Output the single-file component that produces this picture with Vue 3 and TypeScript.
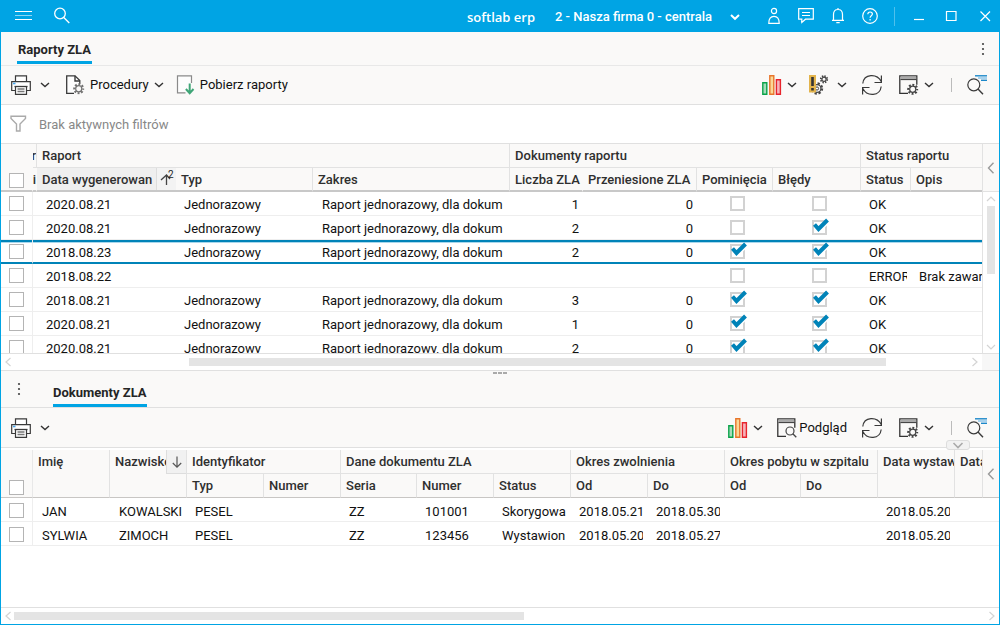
<script setup lang="ts">
import { ref } from 'vue'

interface Report {
  date: string
  type: string
  range: string
  count: string
  moved: string
  skipped: boolean
  errors: boolean
  status: string
  note: string
}

const single = 'Jednorazowy'
const scope = 'Raport jednorazowy, dla dokum'

function report(date: string, count: string, skipped: boolean, errors: boolean): Report {
  return { date, type: single, range: scope, count, moved: '0', skipped, errors, status: 'OK', note: '' }
}

const reports = ref<Report[]>([
  report('2020.08.21', '1', false, false),
  report('2020.08.21', '2', false, true),
  report('2018.08.23', '2', true, true),
  { date: '2018.08.22', type: '', range: '', count: '', moved: '', skipped: false, errors: false, status: 'ERROR', note: 'Brak zawar' },
  report('2018.08.21', '3', true, true),
  report('2020.08.21', '1', true, true),
  report('2020.08.21', '2', true, true)
])
const selected = ref(2)

const documents = ref<string[][]>([
  ['JAN', 'KOWALSKI', 'PESEL', '', 'ZZ', '101001', 'Skorygowa', '2018.05.21', '2018.05.30', '', '', '2018.05.20', ''],
  ['SYLWIA', 'ZIMOCH', 'PESEL', '', 'ZZ', '123456', 'Wystawion', '2018.05.20', '2018.05.27', '', '', '2018.05.20', '']
])
const documentColumns = ['Typ', 'Numer', 'Seria', 'Numer', 'Status', 'Od', 'Do', 'Od', 'Do']
</script>

<template>
  <svg class="symbols" aria-hidden="true">
    <symbol id="chev" viewBox="0 0 10 6"><path d="M1 1l4 3.600L9 1" fill="none" stroke="#333" stroke-width="1.400" /></symbol>
    <symbol id="print" viewBox="0 0 20 20">
      <g fill="#fff" stroke="#3a3a3a" stroke-width="1.200">
        <path d="M4.500 7V.8h11V7M4.500 15.500H.7V6.700h18.600v8.800h-3.800" />
        <path d="M4.500 11.500h11v7.800h-11z" />
      </g>
      <path d="M3.500 11.500h13" stroke="#3a3a3a" stroke-width="1.300" />
      <path d="M6.500 14h7M6.500 16.500h7" stroke="#777" stroke-width="1.400" />
      <path d="M2 8.500h2.500" stroke="#4aa8ee" stroke-width="1.600" />
    </symbol>
    <symbol id="gear" viewBox="0 0 12 12">
      <g fill="none">
        <circle cx="6" cy="6" r="4.700" stroke="#444" stroke-width="2.200" stroke-dasharray="2 1.690" stroke-dashoffset="1" />
        <circle cx="6" cy="6" r="3.200" fill="#faf9f8" stroke="#444" stroke-width="1.300" />
      </g>
    </symbol>
    <symbol id="bars" viewBox="0 0 20 20">
      <path d="M.8 7.800h4v11.400h-4z" fill="#a6dcbb" stroke="#0aa34a" stroke-width="1.400" />
      <path d="M7.800.8h4v18.400h-4z" fill="#fbd896" stroke="#e8762c" stroke-width="1.400" />
      <path d="M14.400 4.800h4v14.400h-4z" fill="#f6b3ba" stroke="#e8242c" stroke-width="1.400" />
    </symbol>
    <symbol id="refresh" viewBox="0 0 20 20">
      <g fill="none" stroke="#3a3a3a" stroke-width="1.200">
        <path d="M.8 8.500C2-1.500 15-1.700 19.200 6.500M12.500 7.500h6.900V.5" />
        <path d="M19.200 11.500C18 21.500 5 21.700.8 13.500M7.500 12.500H.6v7" />
      </g>
    </symbol>
    <symbol id="window" viewBox="0 0 20 20">
      <path d="M.7.800h17v17.900H.7z" fill="#faf9f8" />
      <path d="M9 18.400H.8V.8h17v9" fill="none" stroke="#333" stroke-width="1.300" />
      <path d="M1.500 2.800h15.700" stroke="#aaa" stroke-width="2.400" />
      <path d="M1.500 4.600h15.700" stroke="#333" stroke-width="1" />
    </symbol>
    <symbol id="find" viewBox="0 0 20 20">
      <g fill="none">
        <circle cx="6.800" cy="9.800" r="6" stroke="#3a3a3a" stroke-width="1.200" />
        <path d="M11 14l5 5.200" stroke="#3a3a3a" stroke-width="1.400" />
        <path d="M8 .8h12" stroke="#1b87c9" stroke-width="1.400" />
        <path d="M11 3h9" stroke="#8cc4ea" stroke-width="1.500" />
        <path d="M14 5.300h6" stroke="#1b87c9" stroke-width="1.400" />
      </g>
    </symbol>
    <symbol id="left" viewBox="0 0 8 12"><path d="M6.500.8L1.500 6l5 5.200" fill="none" stroke="currentColor" stroke-width="1.400" /></symbol>
  </svg>

  <div class="app">
    <header class="title">
      <button class="t-btn" aria-label="Menu">
        <svg width="18" height="12"><path d="M0 1.500h17M0 9.500h17" stroke="#fff" /><path d="M0 5.500h17" stroke="#8dd6f4" /></svg>
      </button>
      <button class="t-btn find" aria-label="Szukaj">
        <svg width="18" height="18" fill="none" stroke="#fff" stroke-width="1.300"><circle cx="7" cy="6.500" r="5.300" /><path d="M10.800 10.500l5.500 5.500" /></svg>
      </button>
      <span class="brand">softlab erp</span>
      <button class="firm">2 - Nasza firma 0 - centrala
        <svg width="10" height="8" fill="none" stroke="#fff" stroke-width="2"><path d="M1 2l4 3.800L9 2" /></svg>
      </button>
      <button class="t-icon" aria-label="Użytkownik">
        <svg width="12" height="18" fill="none" stroke="#fff" stroke-width="1.200"><circle cx="6" cy="4" r="2.600" /><path d="M.8 16.300c0-4.500 1.400-7 5.200-7s5.200 2.500 5.200 7z" /></svg>
      </button>
      <button class="t-icon" aria-label="Wiadomości">
        <svg width="16" height="18" fill="none" stroke="#fff" stroke-width="1.200"><path d="M.7 1.700h14.600v10.500H7.500l-3.700 3.300v-3.300H.7zM4 5.500h8M4 8.500h8" /></svg>
      </button>
      <button class="t-icon" aria-label="Powiadomienia">
        <svg width="14" height="18" fill="none" stroke="#fff" stroke-width="1.200"><path d="M1 13.300h12M2.500 13V7.500C2.500 4.300 4.300 2.500 7 2.500s4.500 1.800 4.500 5V13M7 1v1.500M5.300 15.700h3.400" /></svg>
      </button>
      <button class="t-icon" aria-label="Pomoc">
        <svg width="16" height="18" fill="none" stroke="#fff" stroke-width="1.200"><circle cx="8" cy="9" r="7.300" /><path d="M5.800 7.300c0-1.500 1-2.300 2.300-2.300s2.300.8 2.300 2.100c0 1.600-2.300 1.700-2.300 3.600M8.100 12v1.400" /></svg>
      </button>
      <i class="t-sep"></i>
      <button class="t-icon" aria-label="Minimalizuj"><svg width="12" height="12"><path d="M1 9.500h10" stroke="#fff" stroke-width="1.200" /></svg></button>
      <button class="t-icon" aria-label="Maksymalizuj"><svg width="12" height="12"><path d="M1.500 1.500h9.500v9h-9.500z" fill="none" stroke="#fff" stroke-width="1.200" /></svg></button>
      <button class="t-icon close" aria-label="Zamknij"><svg width="12" height="12"><path d="M1.500 1.500l9.500 9.500M11 1.500L1.500 11" stroke="#fff" stroke-width="1.200" /></svg></button>
    </header>

    <section class="pane reports">
      <div class="tabs">
        <button class="tab">Raporty ZLA</button>
        <button class="more right" aria-label="Więcej"><svg width="4" height="14" fill="#444"><circle cx="2" cy="2" r="1.100" /><circle cx="2" cy="7" r="1.100" /><circle cx="2" cy="12" r="1.100" /></svg></button>
      </div>
      <div class="toolbar">
        <button class="tool split" aria-label="Drukuj"><svg class="i20"><use href="#print" /></svg><svg class="chev"><use href="#chev" /></svg></button>
        <button class="tool procedures">
          <svg class="i20">
            <path d="M9 18.300H1.700V.8H10l4.800 4.800v3.200" fill="#fdfdfd" stroke="#3a3a3a" stroke-width="1.300" />
            <path d="M10 .8v5.200h5" fill="none" stroke="#3a3a3a" stroke-width="1.400" />
            <use class="soft" href="#gear" x="8" y="8" width="11.500" height="11.500" />
          </svg>
          <span>Procedury</span><svg class="chev"><use href="#chev" /></svg>
        </button>
        <button class="tool download">
          <svg class="i20">
            <path d="M9.500 17.800H1.500V.8h14V8" fill="#fdfdfd" stroke="#8a8a8a" stroke-width="1.200" />
            <path d="M13.700 8.500V18M9.900 14l3.800 4.200 3.800-4.200" fill="none" stroke="#3fa577" stroke-width="2" />
          </svg>
          <span>Pobierz raporty</span>
        </button>
        <div class="tools">
          <button class="tool" aria-label="Wykres"><svg class="i20"><use href="#bars" /></svg><svg class="chev"><use href="#chev" /></svg></button>
          <button class="tool wide" aria-label="Operacje">
            <svg class="i20">
              <circle cx="8" cy="13.500" r="5" fill="none" stroke="#444" stroke-width="2.400" stroke-dasharray="2.200 1.720" />
              <circle cx="8" cy="13.500" r="3.900" fill="#faf9f8" stroke="#444" stroke-width="1.200" />
              <circle cx="8" cy="13.500" r="1.600" fill="none" stroke="#444" />
              <circle cx="15" cy="4.300" r="3.200" fill="none" stroke="#444" stroke-width="1.800" stroke-dasharray="1.400 1.110" />
              <circle cx="15" cy="4.300" r="2.100" fill="#faf9f8" stroke="#444" stroke-width="1.200" />
              <path d="M0 0h7v17.500H0z" fill="#e3b44c" />
              <path d="M3.500 2v9M3.500 13v2.600" stroke="#333" stroke-width="2.600" />
            </svg>
            <svg class="chev"><use href="#chev" /></svg>
          </button>
          <button class="tool" aria-label="Odśwież"><svg class="i20"><use href="#refresh" /></svg></button>
          <button class="tool" aria-label="Ustawienia okna"><svg class="i20"><use href="#window" /><use href="#gear" x="8" y="8.500" width="11.500" height="11.500" /></svg><svg class="chev"><use href="#chev" /></svg></button>
          <i class="sep"></i>
          <button class="tool" aria-label="Znajdź"><svg class="i20"><use href="#find" /></svg></button>
        </div>
      </div>
      <div class="filters">
        <svg width="18" height="18" fill="none" stroke="#aaa" stroke-width="1.400"><path d="M1 1.200h14.500v2.300L10 9v7H6.500V9L1 3.500z" /></svg>
        <span>Brak aktywnych filtrów</span>
      </div>

      <div class="grid">
        <div class="view">
          <table class="r-table">
            <colgroup>
              <col class="w-check" /><col class="w-cut" /><col class="w-date" /><col class="w-type" /><col class="w-range" /><col class="w-count" />
              <col class="w-moved" /><col class="w-skip" /><col class="w-err" /><col class="w-status" /><col />
            </colgroup>
            <thead>
              <tr>
                <th class="pick" rowspan="2"><input type="checkbox" aria-label="Zaznacz wszystkie raporty" /></th>
                <th class="cut"><div>ar</div></th>
                <th colspan="3"><div>Raport</div></th>
                <th colspan="4"><div>Dokumenty raportu</div></th>
                <th colspan="2" class="last"><div>Status raportu</div></th>
              </tr>
              <tr>
                <th class="cut"><div>i</div></th>
                <th class="sorted">
                  <div><span>Data wygenerowan</span>
                    <b><svg width="16" height="20" fill="none" stroke="#444" stroke-width="1.300"><path d="M9.500 17V7.500M4 12l5.500-5 3.500 4" /></svg><sup>2</sup></b>
                  </div>
                </th>
                <th><div>Typ</div></th>
                <th><div>Zakres</div></th>
                <th class="open"><div>Liczba ZLA</div></th>
                <th><div>Przeniesione ZLA</div></th>
                <th><div>Pominięcia</div></th>
                <th><div>Błędy</div></th>
                <th><div>Status</div></th>
                <th class="last"><div>Opis</div></th>
              </tr>
            </thead>
            <tbody>
              <tr v-for="(r, i) in reports" :key="i" :class="{ selected: i === selected }" @click="selected = i">
                <td class="pick"><input type="checkbox" :aria-label="'Zaznacz raport ' + (i + 1)" /></td>
                <td></td>
                <td><div>{{ r.date }}</div></td>
                <td><div>{{ r.type }}</div></td>
                <td><div>{{ r.range }}</div></td>
                <td class="num"><div>{{ r.count }}</div></td>
                <td class="num"><div>{{ r.moved }}</div></td>
                <td class="flag">
                  <label><input v-model="r.skipped" type="checkbox" aria-label="Pominięcia" />
                    <svg v-if="r.skipped" width="18" height="14"><path d="M2.500 6.500l4 4.500L15.500 2" /></svg></label>
                </td>
                <td class="flag">
                  <label><input v-model="r.errors" type="checkbox" aria-label="Błędy" />
                    <svg v-if="r.errors" width="18" height="14"><path d="M2.500 6.500l4 4.500L15.500 2" /></svg></label>
                </td>
                <td><div>{{ r.status }}</div></td>
                <td class="note"><div>{{ r.note }}</div></td>
              </tr>
            </tbody>
          </table>
        </div>
        <div class="side">
          <button class="fold" aria-label="Zwiń panel"><svg width="8" height="12"><use href="#left" /></svg></button>
          <div class="v-scroll">
            <svg width="10" height="6"><path d="M1 5l4-4 4 4" /></svg>
            <div class="v-track"><i></i></div>
            <svg width="10" height="6"><path d="M1 1l4 4 4-4" /></svg>
          </div>
        </div>
      </div>
      <div class="h-scroll">
        <div class="bar">
          <svg width="8" height="10"><path d="M6.500 1l-4.500 4 4.500 4" /></svg>
          <div class="track"><i class="mid"></i></div>
          <svg width="8" height="10"><path d="M1.500 1L6 5 1.500 9" /></svg>
        </div>
        <div class="corner"></div>
      </div>
    </section>

    <section class="pane documents">
      <div class="grip"><i></i><i></i><i></i></div>
      <div class="tabs">
        <button class="more" aria-label="Więcej"><svg width="4" height="14" fill="#444"><circle cx="2" cy="2" r="1.100" /><circle cx="2" cy="7" r="1.100" /><circle cx="2" cy="12" r="1.100" /></svg></button>
        <button class="tab">Dokumenty ZLA</button>
      </div>
      <div class="toolbar">
        <button class="tool split" aria-label="Drukuj"><svg class="i20"><use href="#print" /></svg><svg class="chev"><use href="#chev" /></svg></button>
        <div class="tools">
          <button class="tool" aria-label="Wykres"><svg class="i20"><use href="#bars" /></svg><svg class="chev"><use href="#chev" /></svg></button>
          <button class="tool preview">
            <svg class="i20"><use href="#window" /><circle cx="13" cy="13" r="4" fill="#faf9f8" stroke="#444" stroke-width="1.200" /><path d="M15.800 15.800l3.500 3.400" stroke="#444" stroke-width="1.300" /></svg>
            <span>Podgląd</span>
          </button>
          <button class="tool" aria-label="Odśwież"><svg class="i20"><use href="#refresh" /></svg></button>
          <button class="tool" aria-label="Ustawienia okna"><svg class="i20"><use href="#window" /><use href="#gear" x="8" y="8.500" width="11.500" height="11.500" /></svg><svg class="chev"><use href="#chev" /></svg></button>
          <i class="sep"></i>
          <button class="tool" aria-label="Znajdź"><svg class="i20"><use href="#find" /></svg></button>
        </div>
        <button class="expander" aria-label="Rozwiń filtry"><svg width="12" height="7"><path d="M1.500 1L6 5.500 10.500 1" fill="none" stroke="#aaa" stroke-width="1.600" /></svg></button>
      </div>

      <div class="grid">
        <div class="view">
          <table class="d-table">
            <colgroup>
              <col class="w-check" /><col v-for="n in 4" :key="n" class="w-doc" /><col class="w-doc2" /><col v-for="n in 4" :key="n" class="w-doc" />
              <col class="w-doc2" /><col v-for="n in 2" :key="n" class="w-doc" /><col /><col class="w-side" />
            </colgroup>
            <thead>
              <tr>
                <th class="pick" rowspan="2"><input type="checkbox" aria-label="Zaznacz wszystkie dokumenty" /></th>
                <th rowspan="2"><div>Imię</div></th>
                <th rowspan="2" class="sort-down">
                  <div><span>Nazwisko</span><b><svg width="12" height="14" fill="none" stroke="#555" stroke-width="1.200"><path d="M6 1.500V12M1.800 8L6 12.200 10.200 8" /></svg></b></div>
                </th>
                <th colspan="2"><div>Identyfikator</div></th>
                <th colspan="3"><div>Dane dokumentu ZLA</div></th>
                <th colspan="2"><div>Okres zwolnienia</div></th>
                <th colspan="2"><div>Okres pobytu w szpitalu</div></th>
                <th rowspan="2"><div>Data wystaw</div></th>
                <th rowspan="2"><div>Data</div></th>
                <th rowspan="2" class="last mid-cell"><button class="fold" aria-label="Zwiń panel"><svg width="8" height="12"><use href="#left" /></svg></button></th>
              </tr>
              <tr>
                <th v-for="(c, i) in documentColumns" :key="i"><div>{{ c }}</div></th>
              </tr>
            </thead>
            <tbody>
              <tr v-for="(d, i) in documents" :key="i">
                <td class="pick"><input type="checkbox" :aria-label="'Zaznacz dokument ' + (i + 1)" /></td>
                <td v-for="(v, k) in d" :key="k"><div>{{ v }}</div></td>
                <td></td>
              </tr>
            </tbody>
          </table>
        </div>
      </div>
      <div class="h-scroll">
        <div class="bar">
          <svg width="8" height="10"><path d="M6.500 1l-4.500 4 4.500 4" /></svg>
          <div class="track"><i class="start"></i></div>
          <svg width="8" height="10"><path d="M1.500 1L6 5 1.500 9" /></svg>
        </div>
      </div>
    </section>
  </div>
</template>

<style>
body { margin: 0; overflow: hidden; }
</style>

<style scoped>
* { box-sizing: border-box; }
.symbols { position: absolute; width: 0; height: 0; }
.app { display: flex; flex-direction: column; height: 100vh; border: 1px solid #00a4e4; border-top: 0; background: #fff; font: 13px/16px Roboto, "Liberation Sans", sans-serif; color: #111; }
button { display: flex; align-items: center; padding: 0; border: 0; background: none; color: inherit; font: inherit; white-space: nowrap; }
svg { display: block; flex: none; }

.title { display: flex; align-items: center; flex: none; height: 32px; background: #00a4e4; color: #fff; }
.t-btn { margin-left: 14px; }
.t-btn.find { margin-left: 20px; }
.brand { margin-left: auto; padding-top: 2px; font: 600 13px/20px "Open Sans", "Noto Sans", sans-serif; }
.firm { gap: 18px; margin: 0 18px 0 20px; padding-top: 1px; font-weight: 500; }
.t-icon { justify-content: center; width: 32px; height: 32px; }
.t-icon.close { justify-content: flex-end; padding-right: 8px; }
.t-sep { width: 1px; height: 19px; margin: 0 8px; background: #4fc0ec; }

.pane { display: flex; flex-direction: column; min-height: 0; position: relative; }
.reports { flex: 339 1 0; }
.documents { flex: 253 1 0; }
.tabs { display: flex; align-items: flex-end; flex: none; height: 34px; padding-left: 16px; background: #faf9f8; border-bottom: 1px solid #e8e8e8; }
.documents .tabs { height: 37px; border-color: #e0e0e0; }
.tab { height: 29px; margin-bottom: 1px; padding: 3px 1px 0; border-bottom: 3px solid #00a4e4; font-weight: 700; color: #252525; }
.documents .tab { margin: 0 0 0 32px; padding: 3px 0 0; }
.more { height: 32px; }
.more.right { margin: 0 14px 0 auto; }
.documents .more { height: 36px; }

.toolbar { position: relative; display: flex; align-items: center; flex: none; height: 39px; padding: 0 12px 0 10px; background: #faf9f8; border-bottom: 1px solid #e0e0e0; }
.documents .toolbar { height: 40px; }
.i20 { width: 20px; height: 20px; }
.chev { width: 10px; height: 6px; }
.tool { gap: 5px; }
.split { gap: 9px; }
.procedures { margin-left: 15px; gap: 5px; }
.download { margin-left: 12px; gap: 4px; }
.soft { opacity: .75; }
.tools { display: flex; align-items: center; gap: 12px; margin-left: auto; }
.tool.wide { gap: 8px; }
.tools .tool:nth-last-child(4) { margin-left: 3px; }
.tools .tool:nth-last-child(3) { margin-left: 5px; }
.preview { gap: 2px; margin-left: 2px; }
.sep { width: 1px; height: 14px; margin: 0 3px 0 5px; background: #bbb; }
.expander { position: absolute; right: 29px; bottom: -3px; justify-content: center; width: 24px; height: 10px; border: 1px solid #ddd; border-radius: 3px; background: #f2f2f2; }

.filters { display: flex; align-items: center; flex: none; gap: 11px; height: 39px; padding-left: 9px; border-bottom: 1px solid #e0e0e0; color: #888; }
.filters span { padding-top: 2px; }

.grid { display: flex; flex: 1; min-height: 0; overflow: hidden; }
.documents .grid { padding-top: 2px; }
.view { flex: 1; min-width: 0; overflow: hidden; }
table { width: 100%; table-layout: fixed; border-collapse: separate; border-spacing: 0; }
.w-check { width: 32px; }
.w-cut { width: 4px; }
.w-date { width: 139px; }
.w-type { width: 137px; }
.w-range { width: 197px; }
.w-count { width: 73px; }
.w-moved { width: 114px; }
.w-skip { width: 76px; }
.w-err { width: 88px; }
.w-status { width: 50px; }
.w-doc { width: 77px; }
.w-doc2 { width: 76px; }
.w-side { width: 16px; }

th { padding: 0; text-align: left; vertical-align: top; font-weight: 500; color: #2f2f2f; background: #faf9f8; border-right: 1px solid #e2e2e2; border-bottom: 1px solid #e2e2e2; }
th div { height: 23px; padding-left: 5px; line-height: 24px; overflow: hidden; white-space: nowrap; }
th[rowspan="2"], tr + tr th { border-bottom: 2px solid #c8c8c8; }
.r-table tr + tr th div { height: 22px; }
.d-table th[rowspan="2"], .d-table tr + tr th { border-bottom: 1px solid #c8c6c4; }
th.pick { vertical-align: bottom; border-right-color: #faf9f8; }
.d-table th.pick { border-right-color: #e8e8e8; }
th.last { border-right: 0; }
th.open { border-right-color: #faf9f8; }
th.cut div { padding: 0; direction: rtl; }
tr + tr th.cut { border-right-color: #faf9f8; }
.sorted div, .sort-down div { display: flex; }
.sorted span, .sort-down span { flex: 1; min-width: 0; overflow: hidden; }
th.sorted { background: #efefef; border-right: 0; }
.sorted b { display: flex; width: 20px; background: #f3f3f3; border-left: 1px solid #ddd; font-weight: 400; }
.sorted sup { width: 0; margin-left: -5px; font-size: 10px; line-height: 14px; color: #222; }
.sort-down b { display: flex; align-items: center; justify-content: center; width: 20px; background: #f1f1f1; border: solid #ddd; border-width: 0 0 1px 1px; }
.sort-down div { height: 24px; }

td { height: 24px; padding: 0; border-bottom: 1px solid #eee; }
td div { height: 23px; margin-right: 4px; padding-left: 9px; line-height: 26px; overflow: hidden; white-space: nowrap; }
.r-table td:nth-child(n + 4) div { padding-left: 8px; }
.r-table td:nth-child(5) div { padding-left: 9px; }
.r-table td.note div { margin: 0; }
.d-table td div { line-height: 28px; margin-right: 5px; }
.d-table td:nth-child(n + 4) div { padding-left: 8px; }
td.num { text-align: right; }
.pick { padding-left: 8px; }
td.pick { border-right: 1px solid #eee; }
.d-table td.pick { padding-top: 1px; }
.selected td { border-bottom: 2px solid #0083b8; box-shadow: inset 0 2px #0083b8, inset 0 3px #a9d7ec; }
.selected td div { height: 22px; }
input { display: block; appearance: none; width: 15px; height: 15px; margin: 0; border: 1px solid #b4b4b4; background: #fff; }
th input { margin-bottom: 2px; }
.flag label { position: relative; display: block; width: 15px; margin: 0 auto; left: 2px; }
.flag input { border: 2px solid #d2d2d2; }
.flag svg { position: absolute; left: 0; top: -2px; fill: none; stroke: #0083b8; stroke-width: 4; filter: drop-shadow(1px 1px 0 #fff); }

.side { display: flex; flex-direction: column; width: 17px; }
.side .fold { justify-content: center; height: 48px; width: 17px; background: #faf9f8; border-bottom: 1px solid #e2e2e2; border-left: 1px solid #e2e2e2; }
.fold { color: #999; width: 100%; justify-content: center; }
.mid-cell { vertical-align: middle; }
.v-scroll { display: flex; flex: 1; flex-direction: column; align-items: center; gap: 4px; min-height: 0; padding: 4px 0 3px; border-left: 1px solid #e2e2e2; }
.v-scroll svg, .bar svg { fill: none; stroke: #d4d4d4; stroke-width: 1.200; }
.v-track { flex: 1; width: 8px; }
.v-track i { display: block; height: 51%; background: #e4e4e4; }
.h-scroll { display: flex; flex: none; height: 18px; border-top: 1px solid #e0e0e0; border-bottom: 1px solid #e0e0e0; }
.documents .h-scroll { height: 17px; border-bottom: 0; }
.bar { display: flex; flex: 1; align-items: center; gap: 2px; padding: 0 3px; }
.track { flex: 1; height: 8px; }
.track i { display: block; height: 8px; background: #e4e4e4; }
.track .mid { width: 73%; margin-left: 18.300%; }
.track .start { width: 52.500%; }
.corner { width: 17px; background: #f7f7f7; }
.grip { position: absolute; top: 1px; left: 0; right: 0; display: flex; justify-content: center; gap: 1px; }
.grip i { width: 4px; height: 2px; background: #aaa; }
</style>
